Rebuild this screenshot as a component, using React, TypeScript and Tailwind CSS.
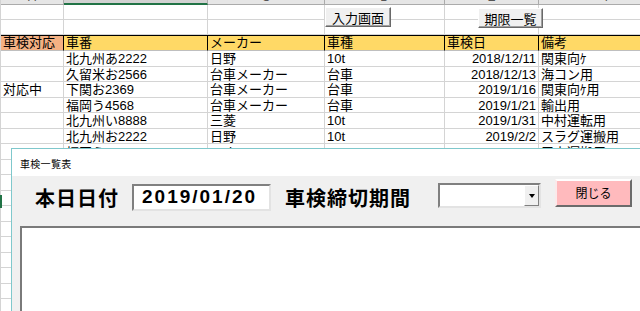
import React from "react";

// column widths of the visible sheet (A..F)
const COLS = ["w-[63px]", "w-[144px]", "w-[117px]", "w-[120px]", "w-[94px]", "w-[140px]"];
const LETTERS = ["A", "B", "C", "D", "E", "F"];

const HEAD = ["車検対応", "車番", "メーカー", "車種", "車検日", "備考"];

const ROWS: string[][] = [
  ["", "北九州あ2222", "日野", "10t", "2018/12/11", "関東向ｹ"],
  ["", "久留米お2566", "台車メーカー", "台車", "2018/12/13", "海コン用"],
  ["対応中", "下関お2369", "台車メーカー", "台車", "2019/1/16", "関東向ｹ用"],
  ["", "福岡う4568", "台車メーカー", "台車", "2019/1/21", "輸出用"],
  ["", "北九州い8888", "三菱", "10t", "2019/1/31", "中村運転用"],
  ["", "北九州お2222", "日野", "10t", "2019/2/2", "スラグ運搬用"],
];
// the row that disappears under the form, only its top shows
const PEEK = ["", "福岡え1234", "いすゞ", "4t", "2019/2/4", "三上運搬用"];

function cn(...c: (string | false | undefined)[]) {
  return c.filter(Boolean).join(" ");
}

function EmptyRow({ h }: { h: string }) {
  return (
    <div className={`flex ${h}`}>
      {COLS.map((w, i) => (
        <div key={i} className={`${w} shrink-0 border-r border-b border-[#d4d4d4]`} />
      ))}
    </div>
  );
}

function Sheet() {
  const blanks = Array.from({ length: 10 });
  return (
    <div className="flex flex-col border-l border-[#d4d4d4] font-['Liberation_Sans','Noto_Sans_CJK_JP',sans-serif] text-[13px]">
      {/* column header strip, mostly scrolled off */}
      <div className="flex h-[5px] overflow-hidden">
        {COLS.map((w, i) => (
          <div
            key={i}
            className={cn(
              w,
              "shrink-0 flex justify-center items-end border-r border-[#ababab] text-[12px] leading-none text-[#555]",
              i === 1 ? "bg-[#d2d2d2] border-b-2 border-b-[#217346]" : "bg-[#e6e6e6] border-b border-b-[#ababab]"
            )}
          >
            <span className="translate-y-[-1px]">{LETTERS[i]}</span>
          </div>
        ))}
      </div>
      <EmptyRow h="h-[14.5px]" />
      <EmptyRow h="h-[15px]" />

      {/* header row */}
      <div className="flex h-[16.5px]">
        {HEAD.map((t, i) => (
          <div
            key={i}
            className={cn(
              COLS[i],
              "shrink-0 flex items-center px-[2px] leading-none border-t border-r border-black border-b border-b-[#bfbfbf]",
              i === 0 ? "bg-[#f4b183]" : "bg-[#ffd966]"
            )}
          >
            {t}
          </div>
        ))}
      </div>

      {ROWS.map((r, ri) => (
        <div key={ri} className="flex h-[15.5px]">
          {r.map((t, i) => (
            <div
              key={i}
              className={cn(
                COLS[i],
                "shrink-0 flex items-center px-[2px] pt-[1px] leading-none whitespace-nowrap border-r border-b border-[#d4d4d4]",
                i === 4 && "justify-end"
              )}
            >
              {t}
            </div>
          ))}
        </div>
      ))}

      <div className="flex h-[15.5px]">
        {PEEK.map((t, i) => (
          <div key={i} className={cn(COLS[i], "shrink-0 border-r border-b border-[#d4d4d4]")}>
            <div className="h-[4px] overflow-hidden">
              <div className={cn("flex h-[15px] items-center px-[2px] pt-[1px] leading-none whitespace-nowrap", i === 4 && "justify-end")}>
                {t}
              </div>
            </div>
          </div>
        ))}
      </div>

      {blanks.map((_, i) => (
        <EmptyRow key={i} h="h-[15.5px]" />
      ))}
    </div>
  );
}

function Form() {
  return (
    <div className="absolute left-[11px] top-[148px] w-[660px] h-[175px] flex flex-col border border-[#7fc8cc] bg-[#f0f0f0]">
      <div className="h-[27px] shrink-0 bg-white flex items-center pl-[8px] pt-[1px] text-[10px] tracking-[0.3px]">
        車検一覧表
      </div>

      <div className="h-[44px] shrink-0 flex items-start pl-[23px]">
        <div className="w-[97px] h-[44px] flex items-center text-[20px] font-bold tracking-[1px]">本日日付</div>
        <div className="w-[139px] h-[27px] mt-[8px] bg-white flex items-center pl-[8px] border-2 border-t-[#808080] border-l-[#808080] border-r-[#e3e3e3] border-b-[#e3e3e3] font-['Liberation_Sans',sans-serif] text-[19px] font-bold tracking-[2px]">
          2019/01/20
        </div>
        <div className="ml-[14px] w-[153px] h-[44px] flex items-center text-[20px] font-bold tracking-[1px]">
          車検締切期間
        </div>
        <div className="w-[103px] h-[25px] mt-[7px] bg-white flex justify-end border-2 border-t-[#808080] border-l-[#808080] border-r-[#e3e3e3] border-b-[#e3e3e3]">
          <div className="w-[15px] h-full bg-[#f0f0f0] flex items-center justify-center border border-t-white border-l-white border-r-[#808080] border-b-[#808080]">
            <div className="w-0 h-0 border-x-[3px] border-x-transparent border-t-[4px] border-t-black" />
          </div>
        </div>
        <button className="ml-[14px] w-[77px] h-[28px] mt-[3px] bg-[#ffbabd] text-[12px] flex items-center justify-center border-2 border-t-white border-l-[#fbe9ea] border-r-[#6b6b6b] border-b-[#6b6b6b]">
          閉じる
        </button>
      </div>

      <div className="ml-[8px] mt-[6px] flex-1 bg-white border-t-2 border-l-2 border-[#7a7a7a]" />
    </div>
  );
}

export default function App() {
  return (
    <div className="relative w-[640px] h-[311px] overflow-hidden bg-white text-black font-['Noto_Sans_CJK_JP',sans-serif]">
      <Sheet />

      <button className="absolute left-[325px] top-[7px] w-[66px] h-[20px] bg-[#f0f0f0] text-[13px] leading-none flex items-center justify-center border border-t-white border-l-white border-r-[#696969] border-b-[#696969] shadow-[inset_-1px_-1px_0_#a0a0a0]">
        入力画面
      </button>
      <button className="absolute left-[478px] top-[8px] w-[65px] h-[20px] bg-[#f0f0f0] text-[13px] leading-none flex items-center justify-center border border-t-white border-l-white border-r-[#696969] border-b-[#696969] shadow-[inset_-1px_-1px_0_#a0a0a0]">
        期限一覧
      </button>

      <div className="absolute left-0 top-[195px] w-[2px] h-[13px] bg-[#217346]" />

      <Form />
    </div>
  );
}
